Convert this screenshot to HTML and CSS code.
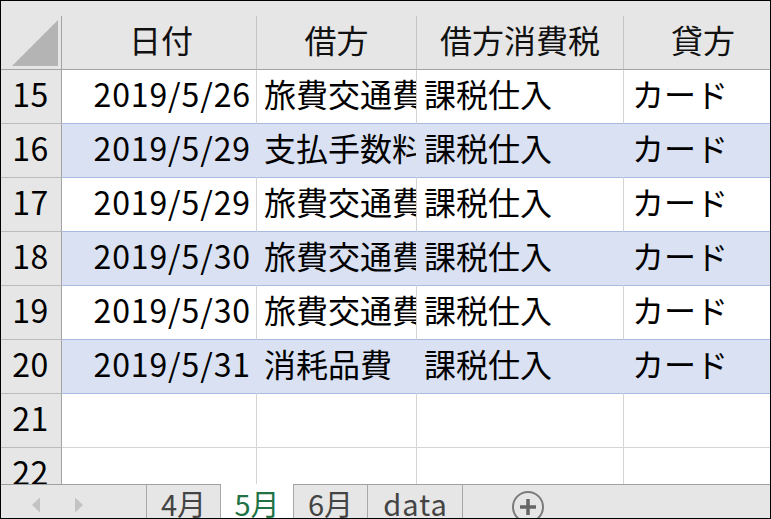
FILE: index.html
```html
<!DOCTYPE html>
<html lang="ja">
<head>
    <meta charset="UTF-8">
    <title>5月</title>
    <link rel="stylesheet" href="styles.css">
</head>
<body>
    <div class="window">
        <div class="sheet">
            <div class="topband"></div>

            <!-- column headers -->
            <div class="row head">
                <div class="corner"><span class="tri"></span></div>
                <div class="ch">日付</div>
                <div class="ch">借方</div>
                <div class="ch">借方消費税</div>
                <div class="ch">貸方</div>
            </div>

            <div class="row">
                <div class="rh">15</div>
                <div class="c date">2019/5/26</div>
                <div class="c">旅費交通費</div>
                <div class="c">課税仕入</div>
                <div class="c">カード</div>
            </div>
            <div class="row band">
                <div class="rh">16</div>
                <div class="c date">2019/5/29</div>
                <div class="c">支払手数料</div>
                <div class="c">課税仕入</div>
                <div class="c">カード</div>
            </div>
            <div class="row">
                <div class="rh">17</div>
                <div class="c date">2019/5/29</div>
                <div class="c">旅費交通費</div>
                <div class="c">課税仕入</div>
                <div class="c">カード</div>
            </div>
            <div class="row band">
                <div class="rh">18</div>
                <div class="c date">2019/5/30</div>
                <div class="c">旅費交通費</div>
                <div class="c">課税仕入</div>
                <div class="c">カード</div>
            </div>
            <div class="row">
                <div class="rh">19</div>
                <div class="c date">2019/5/30</div>
                <div class="c">旅費交通費</div>
                <div class="c">課税仕入</div>
                <div class="c">カード</div>
            </div>
            <div class="row band">
                <div class="rh">20</div>
                <div class="c date">2019/5/31</div>
                <div class="c">消耗品費</div>
                <div class="c">課税仕入</div>
                <div class="c">カード</div>
            </div>
            <div class="row plain">
                <div class="rh">21</div>
                <div class="c"></div>
                <div class="c"></div>
                <div class="c"></div>
                <div class="c"></div>
            </div>
            <div class="row plain">
                <div class="rh">22</div>
                <div class="c"></div>
                <div class="c"></div>
                <div class="c"></div>
                <div class="c"></div>
            </div>
        </div>

        <!-- sheet tabs -->
        <div class="tabs">
            <div class="nav">
                <span class="arrow left"></span>
                <span class="arrow right"></span>
            </div>
            <div class="tab">4月</div>
            <div class="tab active">5月</div>
            <div class="tab">6月</div>
            <div class="tab last">data</div>
            <div class="add">
                <svg width="34" height="34" viewBox="0 0 34 34">
                    <circle cx="17" cy="17" r="15" fill="none" stroke="#7b7b7b" stroke-width="2"/>
                    <path d="M17 9v16M9 17h16" stroke="#666" stroke-width="3.5"/>
                </svg>
            </div>
        </div>
    </div>
</body>
</html>
```

FILE: styles.css
```css
body {
    margin: 0;
    background: #fff;
}
.window {
    width: 771px;
    height: 519px;
    box-sizing: border-box;
    border: 1px solid #000;
    display: flex;
    flex-direction: column;
    font-family: "Noto Sans CJK JP", "Noto Sans", sans-serif;
    color: #000;
    overflow: hidden;
}
.sheet {
    flex: 1;
    overflow: hidden;
    background: #fff;
}
.topband {
    height: 15px;
    background: #e6e6e6;
}
.row {
    display: grid;
    grid-template-columns: 61px 195px 160px 207px 146px;
    height: 54px;
}
.row > div {
    box-sizing: border-box;
    height: 54px;
    font-size: 32px;
    line-height: 46px;
    white-space: nowrap;
    overflow: hidden;
}

/* header row */
.head > div {
    background: #e6e6e6;
    border-bottom: 1px solid #a3a3a3;
    border-right: 1px solid #c4c4c4;
    text-align: center;
    color: #111;
}
.head > div:nth-child(2) {
    padding-left: 4px;
}
.head > div:last-child {
    border-right: none;
    padding-left: 12px;
}
.head .corner {
    border-right: 1px solid #a3a3a3;
    display: flex;
    justify-content: flex-end;
    align-items: flex-end;
    padding: 0 3px 3px 0;
}
.tri {
    width: 46px;
    height: 46px;
    background: #b4b4b4;
    clip-path: polygon(100% 0, 100% 100%, 0 100%);
}

/* row headers */
.rh {
    background: #e6e6e6;
    border-right: 1px solid #a3a3a3;
    border-bottom: 1px solid #bcbcbc;
    text-align: center;
    padding-right: 1px;
    letter-spacing: 0.5px;
}

/* cells */
.c {
    border-right: 1px solid #d4d4d4;
    border-bottom: 1px solid #a9bbe0;
    padding-left: 7px;
}
.c:last-child {
    border-right: none;
    padding-left: 8px;
}
.c.date {
    text-align: right;
    padding-right: 5px;
    letter-spacing: 0.9px;
}
.band .c {
    background: #d9e1f2;
    border-right-color: transparent;
}
.plain .c {
    border-bottom-color: #d4d4d4;
}

/* tab bar */
.tabs {
    height: 34px;
    box-sizing: border-box;
    border-top: 1px solid #a0a0a0;
    background: #e6e6e6;
    display: flex;
    font-size: 29px;
    line-height: 28px;
    color: #444;
}
.nav {
    width: 145px;
    display: flex;
    align-items: center;
    padding-top: 7px;
}
.arrow {
    width: 8px;
    height: 15px;
    background: #c3c3c3;
}
.arrow.left {
    margin-left: 31px;
    clip-path: polygon(0 50%, 100% 0, 100% 100%);
}
.arrow.right {
    margin-left: 35px;
    clip-path: polygon(0 0, 100% 50%, 0 100%);
}
.tab {
    width: 74px;
    box-sizing: border-box;
    border-left: 1px solid #a8a8a8;
    padding-top: 4px;
    text-align: center;
    white-space: nowrap;
}
.tab.active {
    width: 73px;
    background: #fff;
    color: #217346;
    margin-top: -1px;
    padding-top: 5px;
}
.tab.last {
    width: 96px;
    border-right: 1px solid #a8a8a8;
    letter-spacing: 1px;
    padding-left: 1px;
}
.add {
    margin-left: 48px;
    padding-top: 5px;
}
.add svg {
    display: block;
}
```
